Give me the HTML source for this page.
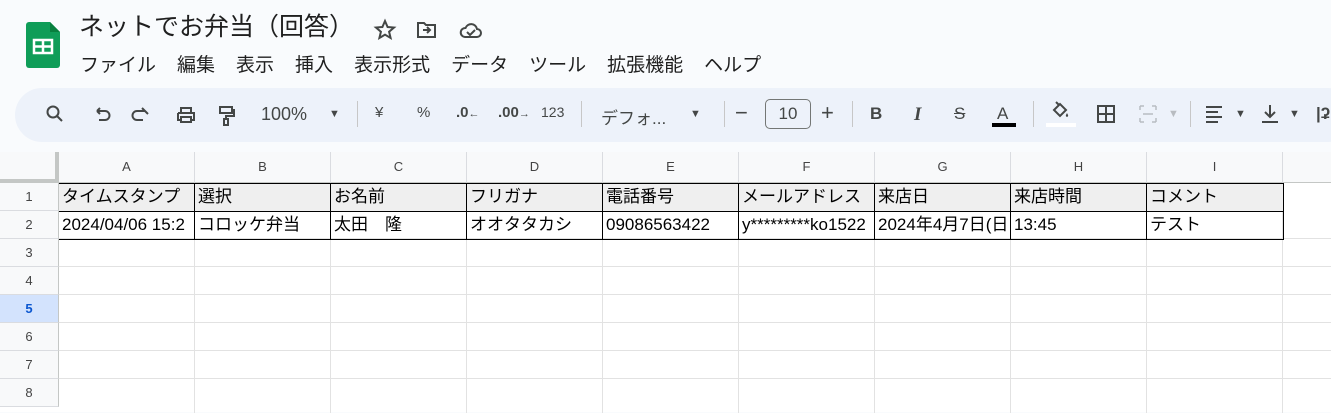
<!DOCTYPE html><html><head><meta charset="utf-8"><style>
*{margin:0;padding:0;box-sizing:border-box}
body{width:1331px;height:402px;overflow:hidden;background:#f9fbfd;font-family:"Liberation Sans","Noto Sans CJK JP",sans-serif;color:#1f1f1f;position:relative}
.abs{position:absolute}
.title{left:79px;top:7px;font-size:25px;color:#1f1f1f}
.menu{left:80px;top:50px;font-size:19px;white-space:nowrap}
.menu span{margin-right:21px}
.tb{left:15px;top:88px;width:1340px;height:54px;background:#edf2fa;border-radius:27px}
.t{position:absolute;top:104px;font-size:17px;color:#444746}
.sep{position:absolute;top:101px;width:1px;height:26px;background:#c7c7c7}
.grid{left:0;top:152px;width:1331px;height:260px;background:#fff}
.ch{position:absolute;top:152px;height:31px;background:#f8f9fa;border-right:1px solid #dadce0;border-bottom:1px solid #c4c7c5;font-size:13px;color:#444;text-align:center;line-height:30px}
.rh{position:absolute;left:0;width:59px;height:28px;background:#f8f9fa;border-bottom:1px solid #dadce0;border-right:1px solid #c4c7c5;font-size:13px;color:#444;text-align:center;line-height:27px}
.hl{position:absolute;left:59px;width:1272px;height:1px;background:#e2e2e2}
.vl{position:absolute;top:183px;width:1px;height:230px;background:#e2e2e2}
.c{position:absolute;height:28px;font-size:17px;line-height:28px;padding-left:3px;overflow:hidden;white-space:nowrap;color:#000}
</style></head><body>
<svg class="abs" style="left:26px;top:22px" width="34" height="46" viewBox="0 0 34 46"><path d="M3 0h21l10 10v33a3 3 0 0 1-3 3H3a3 3 0 0 1-3-3V3a3 3 0 0 1 3-3z" fill="#0f9d58"/><path d="M24 0l10 10h-10z" fill="#087f3e"/><rect x="8" y="18" width="18" height="13" fill="none" stroke="#fff" stroke-width="2.5"/><path d="M8 24.5h18M17 18v13" stroke="#fff" stroke-width="2.5"/></svg>
<div class="abs title">ネットでお弁当（回答）</div>
<svg class="abs" style="left:373px;top:18px" width="130" height="24" viewBox="0 0 130 24" fill="none" stroke="#444746" stroke-width="2"><path d="M12 3l2.6 6 6.4.5-4.9 4.2 1.5 6.3L12 16.7 6.4 20l1.5-6.3L3 9.5l6.4-.5z"/><path d="M45 5h6l2 2h9v12H45z"/><path d="M50 12h7M54 9l3 3-3 3"/><path d="M92 19h12a4 4 0 0 0 0-8 6 6 0 0 0-11.5-1A4.5 4.5 0 0 0 92 19z"/><path d="M94 14l3 3 5-5"/></svg>
<div class="abs menu"><span>ファイル</span><span>編集</span><span>表示</span><span>挿入</span><span>表示形式</span><span>データ</span><span>ツール</span><span>拡張機能</span><span>ヘルプ</span></div>
<div class="abs tb"></div>
<svg class="abs" style="left:44px;top:103px" width="200" height="24" viewBox="0 0 200 24" fill="none" stroke="#444746" stroke-width="2"><circle cx="9" cy="9" r="5.5"/><path d="M13 13l5 5"/><path d="M53 8h8a4 4 0 0 1 0 9h-6M53 8l3-3M53 8l3 3"/><path d="M101 8h-8a4 4 0 0 0 0 9h6M101 8l-3-3M101 8l3 3"/><path d="M134 10h16v7h-3M137 17h-3v-7M137 10V5h10v5M137 14h10v5h-10z"/><path d="M176 4h12v6h-12zM188 7h2v6h-8v3M180 16h4v6h-4z"/></svg>
<div class="t" style="left:261px;font-size:18px">100%</div>
<div class="t" style="left:329px;font-size:11px;top:108px">▼</div>
<div class="sep" style="left:357px"></div>
<div class="t" style="left:375px;font-size:15px">¥</div>
<div class="t" style="left:417px;font-size:15px">%</div>
<div class="t" style="left:456px;font-size:15px;font-weight:bold">.0<span style="font-size:11px;font-weight:normal">←</span></div>
<div class="t" style="left:498px;font-size:15px;font-weight:bold">.00<span style="font-size:11px;font-weight:normal">→</span></div>
<div class="t" style="left:541px;font-size:14px">123</div>
<div class="sep" style="left:581px"></div>
<div class="t" style="left:601px">デフォ...</div>
<div class="t" style="left:690px;font-size:11px;top:108px">▼</div>
<div class="sep" style="left:724px"></div>
<div class="t" style="left:735px;font-size:22px;top:100px">−</div>
<div class="abs" style="left:765px;top:99px;width:46px;height:30px;border:1px solid #747775;border-radius:5px;font-size:17px;text-align:center;line-height:28px;color:#444746">10</div>
<div class="t" style="left:821px;font-size:22px;top:100px">+</div>
<div class="sep" style="left:852px"></div>
<div class="t" style="left:870px;font-weight:bold">B</div>
<div class="t" style="left:914px;font-style:italic;font-family:'Liberation Serif',serif;font-weight:bold;font-size:19px">I</div>
<div class="t" style="left:954px;text-decoration:line-through">S</div>
<div class="t" style="left:997px">A</div>
<div class="abs" style="left:992px;top:123px;width:24px;height:4px;background:#000"></div>
<div class="sep" style="left:1033px"></div>
<svg class="abs" style="left:1050px;top:101px" width="22" height="20" viewBox="0 0 22 20" fill="#444746"><path d="M4 9l6-6 6 6-6 6z" fill="none" stroke="#444746" stroke-width="2"/><path d="M17 12c-1 2-2 3 0 4 2-1 1-2 0-4z"/><path d="M6 1l3 3" stroke="#444746" stroke-width="2"/></svg>
<div class="abs" style="left:1046px;top:123px;width:30px;height:4px;background:#fff"></div>
<svg class="abs" style="left:1096px;top:104px" width="20" height="20" fill="none" stroke="#444746" stroke-width="2"><path d="M2 2h16v16H2zM10 2v16M2 10h16"/></svg>
<svg class="abs" style="left:1138px;top:104px" width="24" height="20" fill="none" stroke="#b8bcc1" stroke-width="1.5"><path d="M2 2h4M2 18h4M2 2v4M2 14v4M18 2h-4M18 18h-4M18 2v4M18 14v4M5 10h10"/></svg>
<div class="t" style="left:1168px;font-size:11px;top:108px;color:#b8bcc1">▼</div>
<div class="sep" style="left:1190px"></div>
<svg class="abs" style="left:1204px;top:104px" width="20" height="20" stroke="#444746" stroke-width="2"><path d="M2 3h16M2 8h12M2 13h16M2 18h12"/></svg>
<div class="t" style="left:1235px;font-size:11px;top:108px">▼</div>
<svg class="abs" style="left:1260px;top:104px" width="20" height="20" fill="none" stroke="#444746" stroke-width="2"><path d="M10 1v12M5 8l5 5 5-5M2 18h16"/></svg>
<div class="t" style="left:1289px;font-size:11px;top:108px">▼</div>
<div class="t" style="left:1316px;font-weight:bold">|ʡ</div>
<div class="abs grid"></div>
<div class="abs" style="left:0;top:152px;width:59px;height:31px;background:#f8f9fa;border-right:4px solid #c4c7c5;border-bottom:4px solid #c4c7c5"></div>
<div class="ch" style="left:59px;width:136px">A</div><div class="ch" style="left:195px;width:136px">B</div><div class="ch" style="left:331px;width:136px">C</div><div class="ch" style="left:467px;width:136px">D</div><div class="ch" style="left:603px;width:136px">E</div><div class="ch" style="left:739px;width:136px">F</div><div class="ch" style="left:875px;width:136px">G</div><div class="ch" style="left:1011px;width:136px">H</div><div class="ch" style="left:1147px;width:136px">I</div><div class="ch" style="left:1283px;width:60px"></div>
<div class="rh" style="top:183px">1</div><div class="rh" style="top:211px">2</div><div class="rh" style="top:239px">3</div><div class="rh" style="top:267px">4</div><div class="rh" style="top:295px;background:#d3e3fd;font-weight:bold;color:#0b57d0">5</div><div class="rh" style="top:323px">6</div><div class="rh" style="top:351px">7</div><div class="rh" style="top:379px">8</div>
<div class="hl" style="top:266px"></div><div class="hl" style="top:294px"></div><div class="hl" style="top:322px"></div><div class="hl" style="top:350px"></div><div class="hl" style="top:378px"></div><div class="hl" style="top:238px"></div>
<div class="vl" style="left:194px"></div><div class="vl" style="left:330px"></div><div class="vl" style="left:466px"></div><div class="vl" style="left:602px"></div><div class="vl" style="left:738px"></div><div class="vl" style="left:874px"></div><div class="vl" style="left:1010px"></div><div class="vl" style="left:1146px"></div><div class="vl" style="left:1282px"></div>
<div class="abs" style="left:59px;top:183px;width:1224px;height:28px;background:#efefef"></div>
<div class="abs" style="left:59px;top:183px;width:1225px;height:57px;border:1px solid #000;border-left:none"></div>
<div class="abs" style="left:59px;top:211px;width:1224px;height:1px;background:#000"></div>
<div class="abs" style="left:194px;top:183px;width:1px;height:56px;background:#000"></div><div class="abs" style="left:330px;top:183px;width:1px;height:56px;background:#000"></div><div class="abs" style="left:466px;top:183px;width:1px;height:56px;background:#000"></div><div class="abs" style="left:602px;top:183px;width:1px;height:56px;background:#000"></div><div class="abs" style="left:738px;top:183px;width:1px;height:56px;background:#000"></div><div class="abs" style="left:874px;top:183px;width:1px;height:56px;background:#000"></div><div class="abs" style="left:1010px;top:183px;width:1px;height:56px;background:#000"></div><div class="abs" style="left:1146px;top:183px;width:1px;height:56px;background:#000"></div>
<div class="c" style="left:59px;top:183px;width:135px">タイムスタンプ</div><div class="c" style="left:195px;top:183px;width:135px">選択</div><div class="c" style="left:331px;top:183px;width:135px">お名前</div><div class="c" style="left:467px;top:183px;width:135px">フリガナ</div><div class="c" style="left:603px;top:183px;width:135px">電話番号</div><div class="c" style="left:739px;top:183px;width:135px">メールアドレス</div><div class="c" style="left:875px;top:183px;width:135px">来店日</div><div class="c" style="left:1011px;top:183px;width:135px">来店時間</div><div class="c" style="left:1147px;top:183px;width:135px">コメント</div>
<div class="c" style="left:59px;top:211px;width:135px">2024/04/06 15:2</div><div class="c" style="left:195px;top:211px;width:135px">コロッケ弁当</div><div class="c" style="left:331px;top:211px;width:135px">太田　隆</div><div class="c" style="left:467px;top:211px;width:135px">オオタタカシ</div><div class="c" style="left:603px;top:211px;width:135px">09086563422</div><div class="c" style="left:739px;top:211px;width:135px">y*********ko1522</div><div class="c" style="left:875px;top:211px;width:135px">2024年4月7日(日</div><div class="c" style="left:1011px;top:211px;width:135px">13:45</div><div class="c" style="left:1147px;top:211px;width:135px">テスト</div>
</body></html>
